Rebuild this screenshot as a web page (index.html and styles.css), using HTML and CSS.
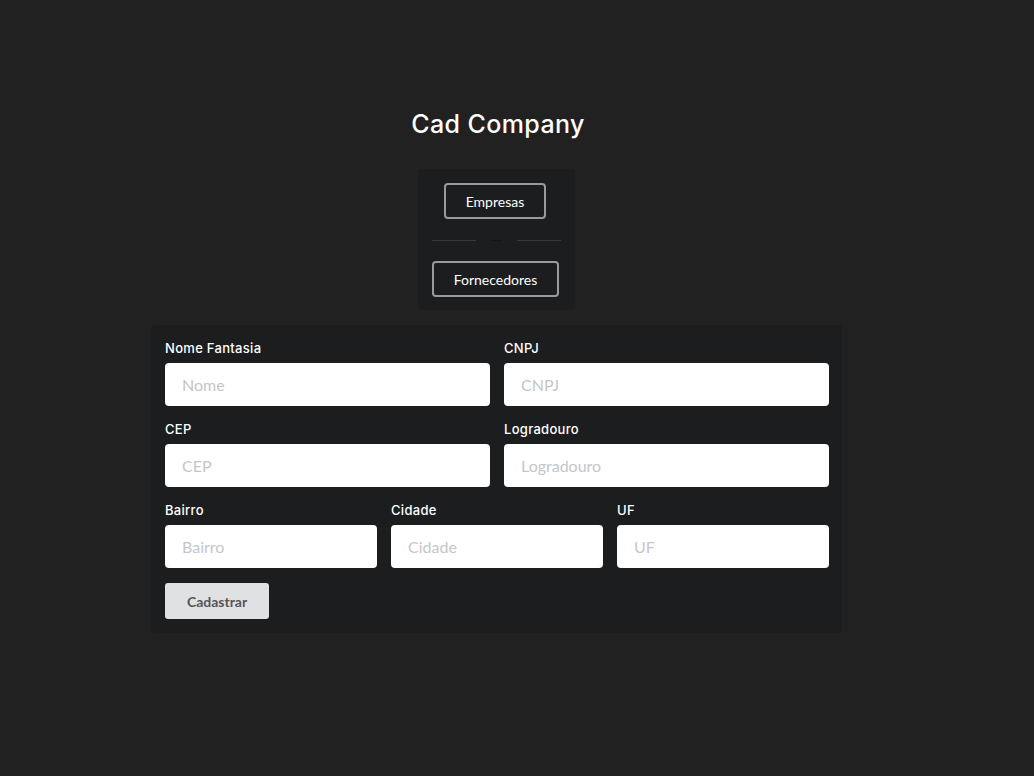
FILE: index.html
```html
<!DOCTYPE html>
<html lang="pt-BR">
<head>
<meta charset="utf-8">
<title>Cad Company</title>
<link rel="stylesheet" href="styles.css">
</head>
<body>
<main class="page">
  <h1 class="title">Cad Company</h1>
  <nav class="nav">
    <button class="nav-btn nav-btn-a">Empresas</button>
    <div class="divider"><span class="line"></span><span class="dash">--</span><span class="line"></span></div>
    <button class="nav-btn nav-btn-b">Fornecedores</button>
  </nav>
  <form class="card">
    <div class="row row-2">
      <div class="field"><label>Nome Fantasia</label><input type="text" placeholder="Nome"></div>
      <div class="field"><label>CNPJ</label><input type="text" placeholder="CNPJ"></div>
    </div>
    <div class="row row-2">
      <div class="field"><label>CEP</label><input type="text" placeholder="CEP"></div>
      <div class="field"><label>Logradouro</label><input type="text" placeholder="Logradouro"></div>
    </div>
    <div class="row row-3">
      <div class="field"><label>Bairro</label><input type="text" placeholder="Bairro"></div>
      <div class="field"><label>Cidade</label><input type="text" placeholder="Cidade"></div>
      <div class="field"><label>UF</label><input type="text" placeholder="UF"></div>
    </div>
    <div class="actions"><button type="button" class="submit">Cadastrar</button></div>
  </form>
</main>
</body>
</html>
```
FILE: styles.css
```css
* { box-sizing: border-box; }
html, body { margin: 0; padding: 0; }
body {
  background: #212121;
  color: #fff;
  font-family: "Lato", "Liberation Sans", sans-serif;
  min-height: 776px;
}
.page {
  display: flex;
  flex-direction: column;
  align-items: center;
  padding: 107px 41px 0 0;
}
.title {
  margin: 0 0 0 3px;
  font-family: "Inter", "Liberation Sans", sans-serif;
  font-weight: 500;
  font-size: 25px;
  line-height: 34px;
  letter-spacing: 0.4px;
  color: #fff;
}
.nav {
  margin-top: 28px;
  width: 157px;
  background: #1c1d1f;
  border-radius: 3px;
  padding: 14px 14px 13px;
  display: flex;
  flex-direction: column;
  align-items: center;
}
.nav-btn {
  background: transparent;
  color: #fff;
  border: 2px solid #9a9a9a;
  border-radius: 4px;
  font-family: "Lato", sans-serif;
  font-size: 14px;
  height: 36px;
  padding: 0;
}
.nav-btn-a { width: 102px; margin-right: 3px; }
.nav-btn-b { width: 127px; margin-right: 2px; }
.divider {
  display: flex;
  align-items: center;
  width: 100%;
  height: 42px;
  gap: 16px;
}
.line { flex: 1; height: 1px; background: #3a3a3a; }
.dash { font-size: 12px; color: #111; line-height: 12px; }
.card {
  margin-top: 15px;
  width: 691px;
  background: #1c1d1f;
  border-radius: 3px;
  padding: 15px 13px 14px 14px;
}
.row { display: grid; gap: 14px; margin-bottom: 15px; }
.row-2 { grid-template-columns: minmax(0, 1fr) minmax(0, 1fr); }
.row-3 { grid-template-columns: minmax(0, 1fr) minmax(0, 1fr) minmax(0, 1fr); }
.field { display: flex; flex-direction: column; min-width: 0; }
.field label {
  font-family: "Inter", "Liberation Sans", sans-serif;
  font-weight: 500;
  font-size: 13px;
  line-height: 16px;
  letter-spacing: 0.3px;
  margin-bottom: 7px;
  color: #fff;
}
.field input {
  width: 100%;
  min-width: 0;
  height: 43px;
  border: none;
  border-radius: 4px;
  background: #fff;
  padding: 0 17px;
  font-family: "Lato", sans-serif;
  font-size: 16px;
  color: #333;
  outline: none;
}
.field input::placeholder { color: #c4c6cc; }
.actions { display: flex; }
.submit {
  width: 104px;
  height: 36px;
  border: none;
  border-radius: 3px;
  background: #e0e1e3;
  color: #555;
  font-family: "Lato", sans-serif;
  font-weight: 700;
  font-size: 14px;
}
```
